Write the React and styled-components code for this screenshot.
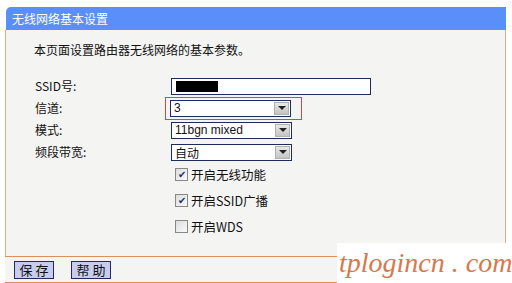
import styled, { createGlobalStyle } from 'styled-components'

const Global = createGlobalStyle`
  body {
    margin: 0;
    background: #ffffff;
    font-family: "Noto Sans CJK SC", "Liberation Sans", sans-serif;
    font-size: 12px;
  }
`

const Page = styled.div`
  position: relative;
  width: 512px;
  height: 283px;
  padding: 7px 6px 0 5px;
  box-sizing: border-box;
  overflow: hidden;
`

const Panel = styled.div`
  display: flex;
  flex-direction: column;
  height: 276px;
`

const Header = styled.div`
  height: 23px;
  background: #5a8ef8;
  border-top-left-radius: 5px;
  color: #ffffff;
  font-size: 12px;
  line-height: 23px;
  padding-left: 6px;
  margin-left: 1px;
`

const Body = styled.div`
  flex: 1;
  background: #f4f4f3;
  border-left: 1px solid #e0b080;
  border-right: 1px solid #d8b088;
  display: flex;
  flex-direction: column;
`

const Intro = styled.div`
  padding: 12px 0 0 28px;
  height: 28px;
  line-height: 16px;
  color: #111;
`

const Form = styled.div`
  display: grid;
  grid-template-columns: 136px 1fr;
  grid-auto-rows: 22px;
  align-items: center;
  padding-left: 29px;
  margin-top: 5px;
`

const Label = styled.div`
  height: 16px;
  line-height: 16px;
  color: #111;
`

const TextBox = styled.div`
  width: 194px;
  height: 15px;
  border: 1px solid #1c2c5c;
  background: #fff;
  display: flex;
  align-items: center;
  padding-left: 4px;
`

const Masked = styled.div`
  width: 42px;
  height: 11px;
  background: #000;
`

const Highlight = styled.div`
  margin-left: -6px;
  width: 137px;
  height: 23px;
  border: 1px solid #cf4848;
  padding: 2px 0 0 4px;
  box-sizing: border-box;
`

const Select = styled.div`
  width: 119px;
  height: 15px;
  border: 1px solid #1c2c5c;
  background: #fff;
  display: flex;
  align-items: center;
  color: #111;
  font-family: ${p => (p.$latin ? '"Liberation Sans", sans-serif' : '"Noto Sans CJK SC", sans-serif')};
  font-size: 12px;
`

const Value = styled.span`
  flex: 1;
  padding-left: 3px;
  line-height: 15px;
`

const Arrow = styled.div`
  width: 15px;
  height: 13px;
  margin-right: 1px;
  background: linear-gradient(#e8e8e8, #c4c4c4);
  border: 1px solid #b0b0b0;
  box-sizing: border-box;
  display: flex;
  align-items: center;
  justify-content: center;
  &::after {
    content: '';
    border-left: 4px solid transparent;
    border-right: 4px solid transparent;
    border-top: 4px solid #222;
  }
`

const Checks = styled.div`
  display: flex;
  flex-direction: column;
  gap: 12px;
  padding-left: 169px;
  margin-top: 4px;
`

const CheckRow = styled.label`
  display: flex;
  align-items: center;
  gap: 3px;
  height: 14px;
  color: #111;
  font-size: 12.5px;
`

const Box = styled.span`
  width: 11px;
  height: 11px;
  border: 1px solid #888;
  background: linear-gradient(135deg, #dcdcdc, #fafafa);
  display: flex;
  align-items: center;
  justify-content: center;
  font-size: 10px;
  line-height: 1;
  color: #203070;
`

const Spacer = styled.div`
  flex: 1;
`

const Footer = styled.div`
  border-top: 1px solid #d89060;
  border-bottom: 1px solid #d89060;
  background: #f4f4f3;
  height: 25px;
  display: flex;
  align-items: center;
  gap: 17px;
  padding-left: 9px;
  margin-right: -1px;
`

const Button = styled.button`
  width: 40px;
  height: 18px;
  padding: 0;
  border: 1px solid #202a60;
  background: #c8ccf0;
  font-family: "Noto Sans CJK SC", sans-serif;
  font-size: 13px;
  letter-spacing: 3px;
  text-indent: 3px;
  white-space: nowrap;
  color: #111;
  line-height: 16px;
`

const Watermark = styled.div`
  position: absolute;
  right: 0;
  bottom: 0;
  width: 175px;
  height: 40px;
  background: #ffffff;
  color: #d8784a;
  font-family: "Liberation Serif", serif;
  font-style: italic;
  font-size: 28px;
  line-height: 40px;
  padding-left: 2px;
  box-sizing: border-box;
  white-space: nowrap;
`

const selects = [
  { label: '模式:', value: '11bgn mixed', latin: true },
  { label: '频段带宽:', value: '自动' },
]

const checks = [
  { text: '开启无线功能', on: true },
  { text: '开启SSID广播', on: true },
  { text: '开启WDS', on: false },
]

export default function App() {
  return (
    <Page>
      <Global />
      <Panel>
        <Header>无线网络基本设置</Header>
        <Body>
          <Intro>本页面设置路由器无线网络的基本参数。</Intro>
          <Form>
            <Label>SSID号:</Label>
            <TextBox><Masked /></TextBox>
            <Label>信道:</Label>
            <Highlight>
              <Select $latin><Value>3</Value><Arrow /></Select>
            </Highlight>
            {selects.map(s => [
              <Label key={s.label + 'l'}>{s.label}</Label>,
              <Select key={s.label + 's'} $latin={s.latin}><Value>{s.value}</Value><Arrow /></Select>,
            ])}
          </Form>
          <Checks>
            {checks.map(c => (
              <CheckRow key={c.text}>
                <Box>{c.on ? '✔' : ''}</Box>
                {c.text}
              </CheckRow>
            ))}
          </Checks>
          <Spacer />
        </Body>
        <Footer>
          <Button>保存</Button>
          <Button>帮助</Button>
        </Footer>
      </Panel>
      <Watermark>tplogincn . com</Watermark>
    </Page>
  )
}
